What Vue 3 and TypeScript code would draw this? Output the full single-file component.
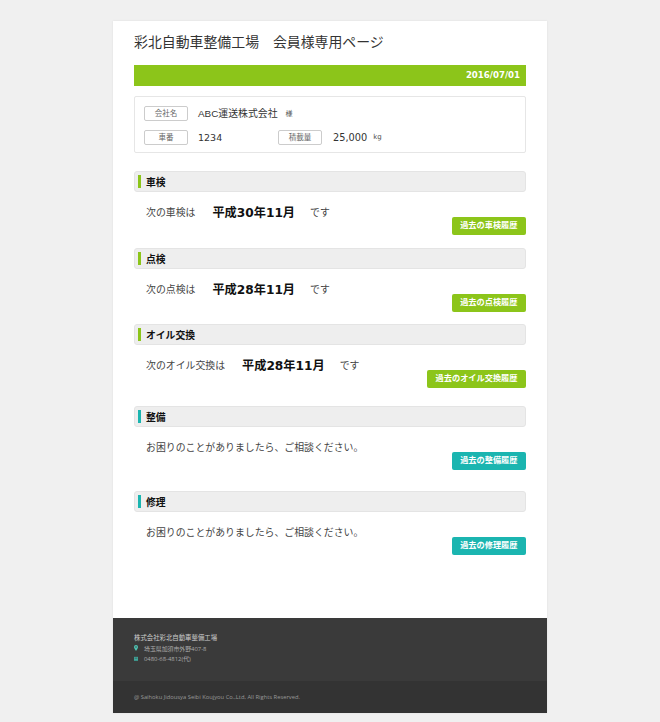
<script setup lang="ts">
interface Section { title: string; kind: 'green' | 'teal'; lead: string; date?: string; button: string; gap: number }
const sections: Section[] = [
  { title: '車検', kind: 'green', lead: '次の車検は', date: '平成30年11月', button: '過去の車検履歴', gap: 13 },
  { title: '点検', kind: 'green', lead: '次の点検は', date: '平成28年11月', button: '過去の点検履歴', gap: 12 },
  { title: 'オイル交換', kind: 'green', lead: '次のオイル交換は', date: '平成28年11月', button: '過去のオイル交換履歴', gap: 18 },
  { title: '整備', kind: 'teal', lead: 'お困りのことがありましたら、ご相談ください。', button: '過去の整備履歴', gap: 21 },
  { title: '修理', kind: 'teal', lead: 'お困りのことがありましたら、ご相談ください。', button: '過去の修理履歴', gap: 0 },
]
</script>

<template>
  <div class="page">
    <div class="card">
      <div class="main">
        <h1 class="title">彩北自動車整備工場　会員様専用ページ</h1>
        <div class="datebar">2016/07/01</div>
        <div class="info">
          <div class="info-row">
            <span class="tag">会社名</span>
            <span class="val company">ABC運送株式会社</span>
            <span class="unit">様</span>
          </div>
          <div class="info-row">
            <span class="tag">車番</span>
            <span class="val num">1234</span>
            <span class="tag">積載量</span>
            <span class="val weight">25,000</span>
            <span class="unit kg">kg</span>
          </div>
        </div>
        <section v-for="s in sections" :key="s.title" class="sec" :class="s.kind" :style="{ marginBottom: s.gap + 'px' }">
          <h2 class="sec-head"><span class="mark"></span>{{ s.title }}</h2>
          <div class="line">
            <span>{{ s.lead }}</span>
            <template v-if="s.date">
              <strong class="date">{{ s.date }}</strong>
              <span>です</span>
            </template>
          </div>
          <div class="btn-row"><span class="btn">{{ s.button }}</span></div>
        </section>
      </div>
      <footer class="foot">
        <div class="foot-top">
          <div class="foot-name">株式会社彩北自動車整備工場</div>
          <div class="foot-line">
            <svg width="4" height="6" viewBox="0 0 6 9"><path d="M3 0a3 3 0 0 1 3 3c0 2-3 6-3 6S0 5 0 3a3 3 0 0 1 3-3z" fill="#4fc4b4"/><circle cx="3" cy="3" r="1" fill="#383838"/></svg>
            <span>埼玉県加須市外野407-8</span>
          </div>
          <div class="foot-line">
            <svg width="4" height="5" viewBox="0 0 6 7"><path d="M0 1h6v6H0z" fill="#3fa79b"/><path d="M1 3h4" stroke="#383838" stroke-width=".8"/></svg>
            <span>0480-68-4812(代)</span>
          </div>
        </div>
        <div class="foot-copy">@ Saihoku Jidousya Seibi Koujyou Co.,Ltd, All Rights Reserved.</div>
      </footer>
    </div>
  </div>
</template>

<style>
html, body { margin: 0; background: #f0f0f0; }
</style>

<style scoped>
.page {
  height: 722px;
  box-sizing: border-box;
  padding-top: 21px;
  overflow: hidden;
  font-family: "Liberation Sans", "Noto Sans CJK JP", sans-serif;
  color: #333;
}
.card {
  width: 434px;
  height: 692px;
  margin-left: 113px;
  background: #fff;
  display: flex;
  flex-direction: column;
  box-shadow: 0 0 2px rgba(0, 0, 0, 0.08);
}
.main { flex: 1; padding: 0 21px; }
.title {
  margin: 11px 0 0;
  font-size: 13.900px;
  line-height: 20px;
  font-weight: 400;
  color: #333;
  white-space: nowrap;
}
.datebar {
  margin-top: 13px;
  height: 21px;
  background: #8cc51a;
  color: #fff;
  font: 700 8.600px/21px "DejaVu Sans", sans-serif;
  text-align: right;
  padding-right: 6px;
}
.info {
  margin-top: 10px;
  height: 57px;
  box-sizing: border-box;
  border: 1px solid #e6e6e6;
  border-radius: 2px;
  padding: 9px 9px 0;
  display: flex;
  flex-direction: column;
  gap: 10px;
}
.info-row { display: flex; align-items: center; height: 14px; }
.tag {
  width: 44px;
  height: 15px;
  box-sizing: border-box;
  border: 1px solid #ccc;
  border-radius: 2px;
  font-size: 7.500px;
  line-height: 13px;
  text-align: center;
  color: #666;
  flex: none;
}
.val {
  margin-left: 10px;
  font-size: 9.900px;
  color: #333;
  white-space: nowrap;
}
.val.num { width: 80px; font-family: "DejaVu Sans", sans-serif; font-size: 9.500px; }
.val.weight { margin-left: 11px; font-family: "DejaVu Sans", sans-serif; font-size: 9.800px; }
.unit { margin-left: 8px; font-size: 7px; color: #555; }
.unit.kg { margin-left: 6px; font-family: "DejaVu Sans", sans-serif; }
.info + .sec { margin-top: 18px; }
.sec-head {
  margin: 0;
  height: 21px;
  box-sizing: border-box;
  background: #eee;
  border: 1px solid #e4e4e4;
  border-radius: 3px;
  display: flex;
  align-items: center;
  font-size: 9.800px;
  font-weight: 700;
  color: #111;
  position: relative;
  padding-left: 11px;
}
.mark {
  position: absolute;
  left: 3px;
  top: 3px;
  width: 3px;
  height: 13px;
}
.green .mark { background: #8cc51a; }
.teal .mark { background: #1bb5b0; }
.line {
  height: 24px;
  margin-top: 8px;
  padding-left: 12px;
  display: flex;
  align-items: center;
  font-size: 9.900px;
  color: #444;
  white-space: nowrap;
}
.date {
  margin: 0 15px 0 17px;
  font: 700 12.200px "DejaVu Sans", "Noto Sans CJK JP", sans-serif;
  color: #111;
}
.btn-row { display: flex; justify-content: flex-end; margin-top: -7px; height: 18px; }
.btn {
  height: 18px;
  padding: 0 8.500px;
  border-radius: 2px;
  color: #fff;
  font-size: 8.200px;
  font-weight: 700;
  line-height: 18px;
}
.green .btn { background: #8cc51a; }
.teal .btn { background: #1bb5b0; }
.foot { flex: none; background: #3a3a3a; color: #bbb; }
.foot-top { height: 63px; box-sizing: border-box; padding: 14px 21px 0; }
.foot-name { font-size: 6.400px; line-height: 11px; color: #ccc; }
.foot-line {
  display: flex;
  align-items: center;
  gap: 6px;
  height: 10.500px;
  font: 5.900px "Open Sans", "Noto Sans CJK JP", sans-serif;
  color: #aaa;
}
.foot-copy {
  height: 32px;
  box-sizing: border-box;
  padding: 0 21px;
  background: #333;
  font: 5.800px/32px "Open Sans", sans-serif;
  color: #999;
}
</style>
